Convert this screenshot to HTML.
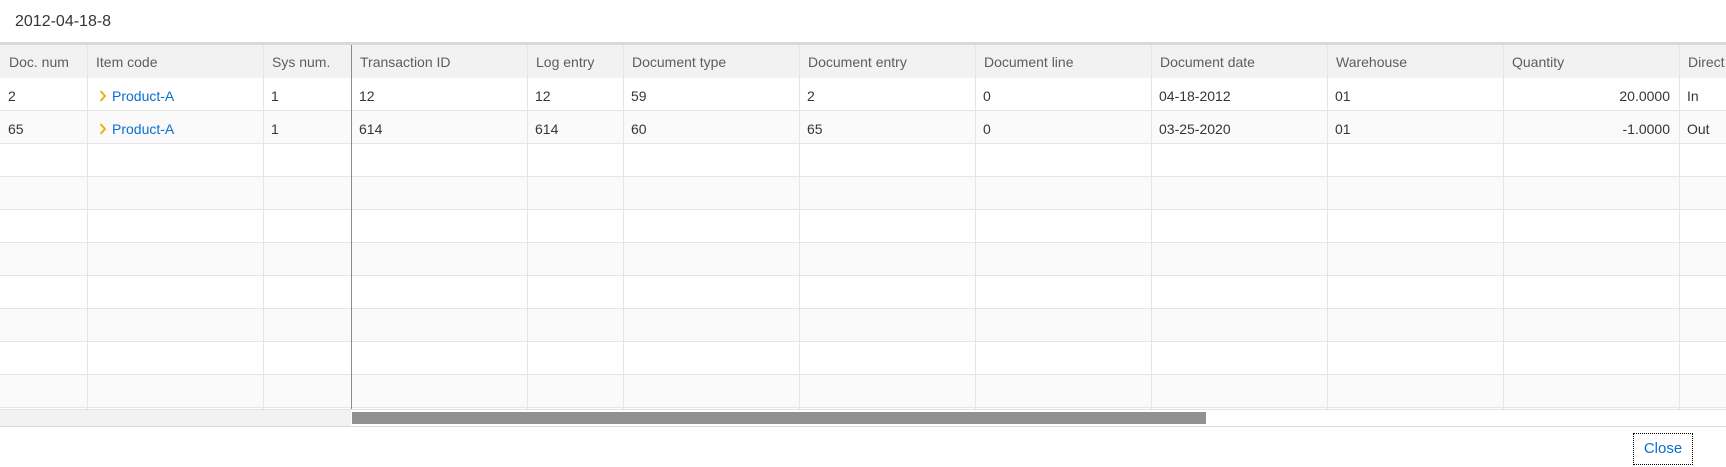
<!DOCTYPE html>
<html><head><style>
body{margin:0;width:1726px;height:467px;background:#fff;font-family:"Liberation Sans",sans-serif;color:#32363a;position:relative;overflow:hidden}
.a{position:absolute}
.t{font-size:14px;white-space:nowrap}
</style></head><body>
<div class="a t" style="left:15px;top:13px;font-size:16px">2012-04-18-8</div>
<div class="a" style="left:0;top:42px;width:1726px;height:3px;background:#d9d9d9"></div>
<div class="a" style="left:0;top:45px;width:1726px;height:33px;background:#f2f2f2;border-bottom:1px solid #e0e0e0"></div>
<div id="rows"></div>
<div class="a" style="left:0;top:409px;width:1726px;height:1px;background:#e0e0e0"></div>
<div class="a" style="left:0;top:410px;width:351px;height:16px;background:#f2f2f2"></div>
<div class="a" style="left:352px;top:412px;width:854px;height:12px;background:#919191"></div>
<div class="a" style="left:0;top:426px;width:1726px;height:1px;background:#d9d9d9"></div>
<div class="a" style="left:1633px;top:433px;width:58px;height:30px;border:1px dotted #000;color:#0a6ed1;font-size:15px;text-align:center;line-height:30px">Close</div>
<script>
var cols=[0,87,263,351,527,623,799,975,1151,1327,1503,1679,1726];
var h=["Doc. num","Item code","Sys num.","Transaction ID","Log entry","Document type","Document entry","Document line","Document date","Warehouse","Quantity","Direct"];
var d=[["2","Product-A","1","12","12","59","2","0","04-18-2012","01","20.0000","In"],["65","Product-A","1","614","614","60","65","0","03-25-2020","01","-1.0000","Out"]];
var s="";
for(var r=0;r<10;r++){var y=78+r*33;s+='<div class="a" style="left:0;top:'+y+'px;width:1726px;height:33px;background:'+(r%2?'#fafafa':'#fff')+';border-bottom:1px solid #e5e5e5;box-sizing:border-box"></div>';}
for(var i=1;i<12;i++){var c=i==3?'#8c8c8c':'#e5e5e5';s+='<div class="a" style="left:'+cols[i]+'px;top:45px;width:1px;height:364px;background:'+c+'"></div>';}
for(var i=0;i<12;i++){s+='<div class="a t" style="left:'+(cols[i]+9)+'px;top:54px;color:#5a5e62">'+h[i]+'</div>';}
for(var r=0;r<2;r++)for(var i=0;i<12;i++){var y=88+r*33,v=d[r][i];
 if(i==1){s+='<svg class="a" style="left:99px;top:'+(y+2)+'px" width="8" height="12"><path d="M1.5 1 L6 6 L1.5 11" stroke="#f0ab00" stroke-width="1.8" fill="none"/></svg><div class="a t" style="left:112px;top:'+y+'px;color:#0a6ed1">'+v+'</div>';}
 else if(i==10){s+='<div class="a t" style="left:'+cols[i]+'px;width:'+(cols[11]-cols[10]-9)+'px;text-align:right;top:'+y+'px">'+v+'</div>';}
 else s+='<div class="a t" style="left:'+(cols[i]+8)+'px;top:'+y+'px">'+v+'</div>';}
document.getElementById('rows').innerHTML=s;
</script>
</body></html>
